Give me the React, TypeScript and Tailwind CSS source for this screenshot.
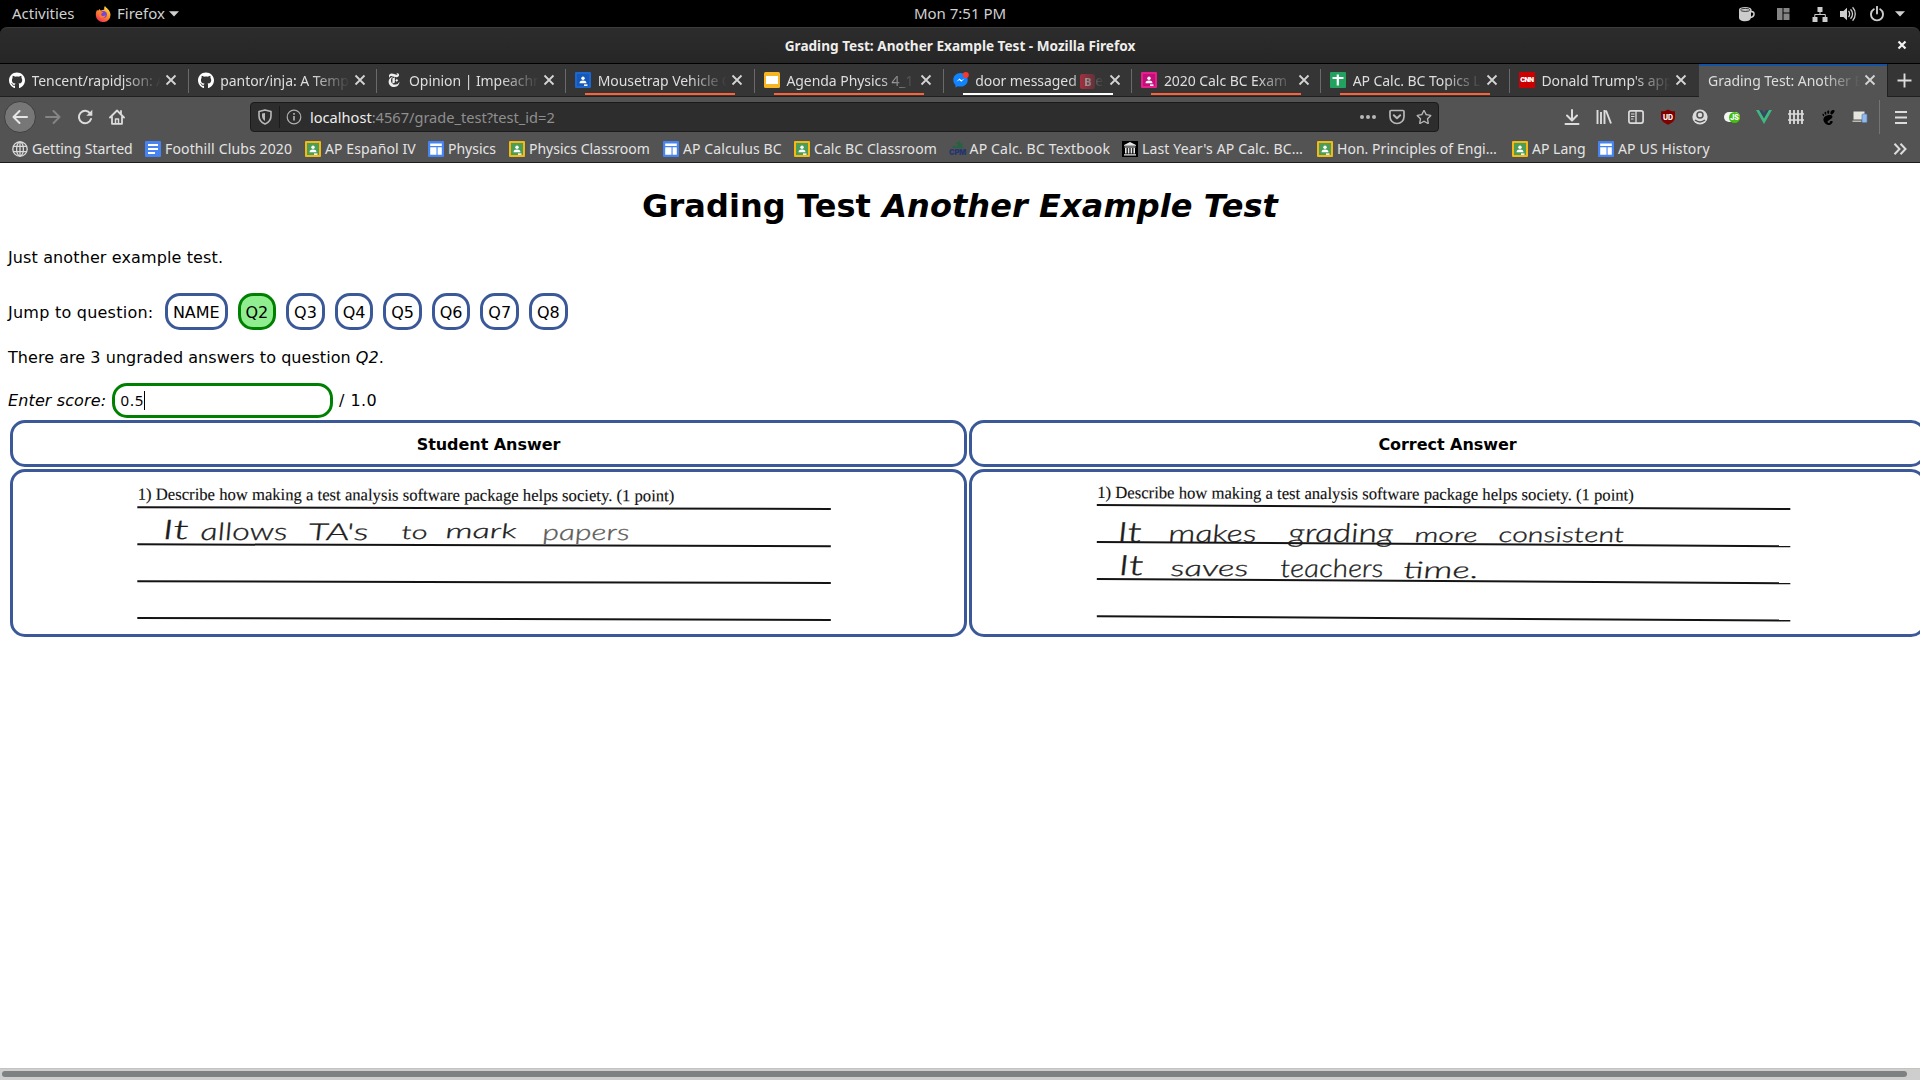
import type { ReactNode } from "react";
import { FaGithub, FaRegStar } from "react-icons/fa";
import { SiGnome, SiNewyorktimes } from "react-icons/si";

/* ---------- favicons ---------- */

const ClassroomIcon = ({ frame, board }: { frame: string; board: string }) => (
  <svg width="16" height="16" viewBox="0 0 16 16" className="shrink-0">
    <rect width="16" height="16" rx="1" fill={frame} />
    <rect x="2" y="2" width="12" height="12" fill={board} />
    <circle cx="8" cy="6.3" r="1.7" fill="#fff" />
    <path d="M4.5 11.3c0-2 1.6-2.7 3.5-2.7s3.5.7 3.5 2.7z" fill="#fff" />
    <rect x="9" y="12.3" width="3.5" height="1.7" fill="#eee" />
  </svg>
);

const ClassroomYellow = () => <ClassroomIcon frame="#f5b912" board="#4c9d58" />;

const SitesIcon = () => (
  <svg width="16" height="16" viewBox="0 0 16 16" className="shrink-0">
    <rect width="16" height="16" rx="1" fill="#4683f3" />
    <path d="M2.2 2.5h11.6v2.6H2.2zM2.2 6.2h6.3v7.6H2.2zM9.6 6.2h4.2v7.6H9.6z" fill="#fff" />
  </svg>
);

const DocsIcon = () => (
  <svg width="16" height="16" viewBox="0 0 16 16" className="shrink-0">
    <rect width="16" height="16" rx="1" fill="#4683f3" />
    <path d="M3 3h10v2H3zM3 7h10v2H3zM3 11h7v2H3z" fill="#fff" />
  </svg>
);

const SlidesIcon = () => (
  <svg width="16" height="16" viewBox="0 0 16 16" className="shrink-0">
    <rect width="16" height="16" rx="1.5" fill="#f6b427" />
    <rect x="2" y="4" width="12" height="8" fill="#fff" />
  </svg>
);

const SheetsIcon = () => (
  <svg width="16" height="16" viewBox="0 0 16 16" className="shrink-0">
    <rect width="16" height="16" rx="1" fill="#23a15f" />
    <path d="M2.5 5h11v2h-4.6v6.5H6.7V7H2.5zM6.7 2.5h2.2V5H6.7z" fill="#fff" />
  </svg>
);

const MessengerIcon = () => (
  <svg width="16" height="16" viewBox="0 0 16 16" className="shrink-0">
    <path d="M7.5 1C3.3 1 .3 4 .3 8c0 2 .9 3.800 2.200 5v2.500l2.300-1.200c.8.2 1.700.3 2.700.3 4.200 0 7.200-2.900 7.200-6.700S11.700 1 7.500 1z" fill="#0f84fe" />
    <path d="M3.300 9.800l3.200-3.300 2 1.700 3-1.700-3.200 3.300-2-1.700z" fill="#fff" />
    <circle cx="12.800" cy="3" r="3" fill="#f5392f" />
  </svg>
);

const CnnIcon = () => (
  <span className="flex h-4 w-4 shrink-0 items-center justify-center bg-[#cc0000] font-['Inter'] text-[6.500px] leading-none font-black tracking-[-0.600px] text-white">
    CNN
  </span>
);

const GlobeIcon = () => (
  <svg width="16" height="16" viewBox="0 0 16 16" className="shrink-0" fill="none" stroke="#dadada" strokeWidth="1.3">
    <circle cx="8" cy="8" r="7.200" />
    <ellipse cx="8" cy="8" rx="3.400" ry="7.200" />
    <path d="M8 .8v14.400M1.500 5.300h13M1.500 10.700h13" />
  </svg>
);

const CpmIcon = () => (
  <span className="flex h-4 w-4 shrink-0 flex-col items-center">
    <svg width="16" height="8" viewBox="0 0 16 8">
      <path d="M9 0l2 2.500 2 .5-1.500 1.500L14 7H2l2-2.500 3 1.500L8 4 6 2.500z" fill="#23633f" />
    </svg>
    <span className="font-['Inter'] text-[7.500px] leading-[8px] font-black tracking-[-0.300px] text-[#25356f]">CPM</span>
  </span>
);

const ArchiveIcon = () => (
  <svg width="16" height="16" viewBox="0 0 16 16" className="shrink-0">
    <rect width="16" height="16" fill="#000" />
    <path d="M2 4l6-3 6 3v.8H2zM2.500 5.500h11v1h-11zM3 7h1.600v5.500H3zM5.800 7h1.600v5.500H5.800zM8.600 7h1.600v5.500H8.600zM11.400 7H13v5.500h-1.600zM2 13.200h12v1.300H2z" fill="#e8e8e8" />
  </svg>
);

/* ---------- desktop panel ---------- */

const Caret = () => (
  <svg width="10" height="6" viewBox="0 0 10 6" className="shrink-0">
    <path d="M0 .3h10L5 5.500z" fill="#d0d0d0" />
  </svg>
);

const FirefoxLogo = () => (
  <svg width="16" height="16" viewBox="0 0 16 16" className="shrink-0">
    <defs>
      <linearGradient id="flame" x1="0.800" y1="0" x2="0.200" y2="1">
        <stop offset="0" stopColor="#ffe34a" />
        <stop offset="0.450" stopColor="#ff9526" />
        <stop offset="1" stopColor="#f0265c" />
      </linearGradient>
    </defs>
    <path d="M10 0c1 1.800 2.600 2.300 3.700 4 1.200 1.600 1.800 3.200 1.800 5A7.300 7 0 0 1 .8 9c0-2 .4-4 1.500-5.300l.6 1.300L4.500 3l1 1.500c1.500-.3 3-.5 3.800-1C9 2 9.200 1 10 0z" fill="url(#flame)" />
    <circle cx="8.300" cy="8.500" r="3.600" fill="#7646d8" />
    <path d="M4.200 6c1.800-.7 3-.3 4 .6l-1.500 1c-.9.600-.8 1.700.300 2.200 1.300.5 2.600 0 3.600-.8-.300 2-1.600 3-3.300 3-2 0-3.600-1.800-3.600-4z" fill="#ff7a2e" />
  </svg>
);

const SystemBar = () => (
  <div className="grid h-[27px] shrink-0 grid-cols-3 items-center bg-black text-[15px] text-[#d0d0d0]">
    <div className="flex items-center pl-3">
      <span className="w-[83px]">Activities</span>
      <FirefoxLogo />
      <span className="mr-[4px] ml-[6px]">Firefox</span>
      <Caret />
    </div>
    <div className="text-center">Mon 7:51 PM</div>
    <div className="flex items-center justify-end pr-[15px]">
      <svg width="17" height="16" viewBox="0 0 17 16" className="mr-[22px]">
        <path d="M1 3.500v8C1 14 3.500 15.200 7 15.200s5.500-1.200 5.800-3C15 12 16.800 10.500 16.800 8S15.500 4.800 13.500 4.800V3.500zM13 6.500c1.400-.2 2.300.3 2.300 1.500S14.300 10.200 13 10.500z" fill="#ccc" fillRule="evenodd" />
        <ellipse cx="7.200" cy="3.700" rx="6.200" ry="2.700" fill="#ccc" />
        <ellipse cx="7.200" cy="3.900" rx="4.600" ry="1.500" fill="#ccc" stroke="#222" strokeWidth="0.900" />
      </svg>
      <svg width="13" height="14" viewBox="0 0 13 14" className="mr-[22px]">
        <path d="M0 1h5.500v12H0zM6.500 1H12.500v4.500h-6zM6.500 6.500H12.500v6.500h-6z" fill="#858585" />
      </svg>
      <svg width="16" height="16" viewBox="0 0 16 16" className="mr-[12px]" fill="#ccc">
        <path d="M5.500 1h5v5h-5zM.5 11h5v5h-5zM10.500 11h5v5h-5z" />
        <path d="M8 6v2.500M2.800 11.500V8.500h10.500v3" fill="none" stroke="#ccc" />
      </svg>
      <svg width="16" height="16" viewBox="0 0 16 16" className="mr-[13px]">
        <path d="M0 5h3.500L7 1.800v12.400L3.500 11H0z" fill="#ccc" />
        <path d="M8.500 5c1.500 1.500 1.500 4.500 0 6M10.500 3.200c2.700 2.500 2.700 7 0 9.600M12.600 1.300c3.500 3.500 3.500 10 0 13.400" fill="none" stroke="#ccc" strokeWidth="1.300" />
      </svg>
      <svg width="16" height="16" viewBox="0 0 16 16" className="mr-[10px]" fill="none" stroke="#ccc" strokeWidth="1.900">
        <path d="M4.800 3.300a6 6 0 1 0 6.400 0M8 .8v6.700" strokeLinecap="round" />
      </svg>
      <Caret />
    </div>
  </div>
);

const TitleBar = () => (
  <div className="bg-black">
    <div className="relative flex h-9 items-center justify-center rounded-t-[7px] border-t border-[#3b3b3b] bg-gradient-to-b from-[#2c2c2c] to-[#262626] pt-[2px] text-[13.600px] font-bold text-[#eeeeec]">
      Grading Test: Another Example Test - Mozilla Firefox
      <svg width="10" height="10" viewBox="0 0 10 10" className="absolute top-[12px] right-[13px]">
        <path d="M1.500 1.500l7 7M8.500 1.500l-7 7" stroke="#f2f2f2" strokeWidth="2.200" />
      </svg>
    </div>
  </div>
);

/* ---------- tabs ---------- */

const CloseX = () => (
  <svg width="12" height="12" viewBox="0 0 12 12" className="shrink-0">
    <path d="M1.500 1.500l9 9M10.500 1.500l-9 9" stroke="#d4d4d4" strokeWidth="1.800" />
  </svg>
);

type TabData = { title: ReactNode; icon?: ReactNode; bar?: string; active?: boolean; last?: boolean };

const tabs: TabData[] = [
  { title: "Tencent/rapidjson: A", icon: <FaGithub size={17} color="#fff" /> },
  { title: "pantor/inja: A Temp", icon: <FaGithub size={17} color="#fff" /> },
  { title: "Opinion | Impeachm", icon: <SiNewyorktimes size={14} color="#eee" /> },
  { title: "Mousetrap Vehicle C", icon: <ClassroomIcon frame="#1b66cf" board="#1658b8" />, bar: "bg-[#ff6139]" },
  { title: "Agenda Physics 4_1", icon: <SlidesIcon />, bar: "bg-[#ff6139]" },
  {
    title: (
      <>
        door messaged{" "}
        <span className="inline-flex h-[15px] w-[15px] items-center justify-center rounded-[2px] bg-[#dd2e44] text-[11px] leading-none font-bold text-white">B</span>
        er
      </>
    ),
    icon: <MessengerIcon />,
    bar: "bg-white",
  },
  { title: "2020 Calc BC Exam", icon: <ClassroomIcon frame="#e91e8c" board="#c2107a" />, bar: "bg-[#ff6139]" },
  { title: "AP Calc. BC Topics L", icon: <SheetsIcon />, bar: "bg-[#ff6139]" },
  { title: "Donald Trump's app", icon: <CnnIcon />, last: true },
  { title: "Grading Test: Another E", active: true },
];

const Tab = ({ title, icon, bar, active, last }: TabData) => (
  <div
    className={
      active
        ? "relative flex w-[188.800px] items-center border-t-2 border-[#15539e] bg-[#535353] pr-[11.500px] pb-[3px] pl-[9.500px]"
        : "relative flex w-[188.740px] items-center border-b border-[#202020] bg-[#353535] pr-[11.500px] pl-[9px]"
    }
  >
    {icon && <span className="mr-[6.500px] flex w-4 shrink-0 justify-center">{icon}</span>}
    <span className="mr-[4px] min-w-0 flex-1 overflow-hidden tracking-[-0.060px] whitespace-nowrap [mask-image:linear-gradient(to_right,black_calc(100%_-_38px),transparent)]">{title}</span>
    <CloseX />
    {bar && <span className={`absolute bottom-px left-[19px] h-[2px] w-[150px] ${bar}`} />}
    {!active && !last && <span className="absolute top-[5px] right-0 h-6 w-px bg-[#6a6a6a]" />}
  </div>
);

const TabStrip = () => (
  <div className="flex h-[34px] shrink-0 border-t border-black bg-[#353535] text-[14px] text-[#dedede]">
    {tabs.map((t, i) => (
      <Tab key={i} {...t} />
    ))}
    <div className="flex flex-1 items-center justify-center border-b border-l border-[#202020]">
      <svg width="15" height="15" viewBox="0 0 15 15">
        <path d="M7.500.5v14M.5 7.500h14" stroke="#dcdcdc" strokeWidth="1.900" />
      </svg>
    </div>
  </div>
);

/* ---------- toolbar ---------- */

const Slot = ({ children }: { children: ReactNode }) => (
  <span className="flex w-8 shrink-0 items-center justify-center">{children}</span>
);

const Toolbar = () => (
  <div className="flex h-10 shrink-0 items-center bg-[#535353]">
    <div className="flex w-[250px] items-center pl-1">
      <span className="mr-[1px] flex h-8 w-8 items-center justify-center rounded-full border border-[#3f3f3f] bg-[#777777]">
        <svg width="16" height="16" viewBox="0 0 16 16" fill="none" stroke="#e6e6e6" strokeWidth="2" strokeLinecap="round" strokeLinejoin="round">
          <path d="M15 8H1.500M7.500 2l-6 6 6 6" />
        </svg>
      </span>
      <Slot>
        <svg width="16" height="16" viewBox="0 0 16 16" fill="none" stroke="#858585" strokeWidth="2" strokeLinecap="round" strokeLinejoin="round">
          <path d="M1 8h13.500M8.500 2l6 6-6 6" />
        </svg>
      </Slot>
      <Slot>
        <svg width="16" height="16" viewBox="0 0 16 16" fill="none" stroke="#dcdcdc" strokeWidth="2">
          <path d="M13.200 4.500a6.200 6.200 0 1 0 .8 5.500" strokeLinecap="round" />
          <path d="M15.300.8v6h-6z" fill="#dcdcdc" stroke="none" />
        </svg>
      </Slot>
      <Slot>
        <svg width="16" height="16" viewBox="0 0 16 16" fill="none" stroke="#dcdcdc" strokeWidth="1.800" strokeLinejoin="round" strokeLinecap="round">
          <path d="M1 8.500L8 1.500l7 7M3 8v6.800h10V8M12 2v3" />
          <path d="M6.500 14.500v-4.500h3v4.500" strokeWidth="1.500" />
        </svg>
      </Slot>
    </div>
    <div className="flex h-[30px] w-[1189px] items-center rounded-[4px] border border-[#1b1b1b] bg-[#2d2d2d] pl-[7px]">
      <svg width="14" height="16" viewBox="0 0 14 16" fill="none" stroke="#b8b8b8" strokeWidth="1.600">
        <path d="M1 2.500L7 1l6 1.500V7c0 4-2.500 6.500-6 8-3.500-1.500-6-4-6-8z" strokeLinejoin="round" />
        <path d="M7 4v8c-2-1.200-3-3-3-5V4.500z" fill="#b8b8b8" stroke="none" />
      </svg>
      <span className="mr-[6px] ml-[7px] h-[22px] w-px bg-[#1b1b1b]" />
      <svg width="16" height="16" viewBox="0 0 16 16" fill="none" stroke="#b0b0b0" strokeWidth="1.200">
        <circle cx="8" cy="8" r="6.800" />
        <path d="M8 7v4.500M8 4v1.700" strokeWidth="1.700" />
      </svg>
      <span className="ml-[8px] flex-1 pt-[2px] text-[14.600px] text-[#8f8f8f]">
        <span className="text-[#eeeeec]">localhost</span>:4567/grade_test?test_id=2
      </span>
      <svg width="16" height="4" viewBox="0 0 16 4" className="mr-[13px]" fill="#b8b8b8">
        <circle cx="2" cy="2" r="2" />
        <circle cx="8" cy="2" r="2" />
        <circle cx="14" cy="2" r="2" />
      </svg>
      <svg width="16" height="16" viewBox="0 0 16 16" className="mr-[11px]" fill="none" stroke="#b8b8b8" strokeWidth="1.700" strokeLinejoin="round" strokeLinecap="round">
        <path d="M1 2.500C1 1.800 1.300 1.500 2 1.500h12c.7 0 1 .3 1 1V7.500c0 4-3 7-7 7s-7-3-7-7z" />
        <path d="M4.800 6.300L8 9.300l3.200-3" strokeWidth="2" />
      </svg>
      <FaRegStar size={16} color="#b8b8b8" className="mr-[6px]" />
    </div>
    <div className="flex flex-1 items-center pl-[117px]">
      <Slot>
        <svg width="16" height="16" viewBox="0 0 16 16" fill="none" stroke="#dcdcdc" strokeWidth="2" strokeLinecap="round" strokeLinejoin="round">
          <path d="M8 1v10M3 6.500l5 5 5-5M1.500 15h13" />
        </svg>
      </Slot>
      <Slot>
        <svg width="16" height="16" viewBox="0 0 16 16" fill="none" stroke="#dcdcdc" strokeWidth="1.900">
          <path d="M1.500 1v14M5 3v12M8.500 1v14M10 1.500L15 14.500" />
        </svg>
      </Slot>
      <Slot>
        <svg width="16" height="16" viewBox="0 0 16 16" fill="none" stroke="#dcdcdc" strokeWidth="1.700">
          <rect x="0.900" y="1.900" width="14.200" height="12.200" rx="2" />
          <path d="M8 2v12" strokeWidth="1.300" />
          <path d="M3 5h3.500M3 7.500h3.500M3 10h2.500" strokeWidth="1.100" />
        </svg>
      </Slot>
      <Slot>
        <span className="relative flex h-4 w-4 items-center justify-center">
          <svg width="16" height="16" viewBox="0 0 16 16" className="absolute inset-0">
            <path d="M8 .5C6 1.800 4 2.300 1 2.300V8c0 4 3 6 7 7.700C12 14 15 12 15 8V2.300C12 2.300 10 1.800 8 .5z" fill="#800000" />
          </svg>
          <span className="relative font-['Inter'] text-[7px] leading-none font-extrabold text-white">UD</span>
        </span>
      </Slot>
      <Slot>
        <svg width="16" height="16" viewBox="0 0 16 16">
          <circle cx="8" cy="8" r="7.600" fill="#dcdcdc" />
          <circle cx="8" cy="6" r="3" fill="none" stroke="#535353" strokeWidth="1.500" />
          <path d="M3 11c3 2.300 7 2.300 10 0" fill="none" stroke="#535353" strokeWidth="1.500" />
        </svg>
      </Slot>
      <Slot>
        <span className="flex h-[10px] w-4 items-center justify-end rounded-full bg-[#f4f4f4]">
          <span className="flex h-[11px] w-[11px] shrink-0 items-center justify-center rounded-full bg-[#43bf0e] font-['Inter'] text-[7px] leading-none font-extrabold text-white">JS</span>
        </span>
      </Slot>
      <Slot>
        <svg width="16" height="16" viewBox="0 0 16 16">
          <path d="M0 1h3.200L8 9.300 12.800 1H16L8 15z" fill="#41b883" />
          <path d="M3.200 1h3L8 4.100 9.800 1h3L8 9.300z" fill="#34495e" />
        </svg>
      </Slot>
      <Slot>
        <svg width="16" height="16" viewBox="0 0 16 16" fill="none" stroke="#dcdcdc" strokeWidth="1.800">
          <path d="M2 1v14M6 1v14M10 1v14M14 1v14" />
          <path d="M0 5h16M0 11h16" strokeWidth="1.400" />
        </svg>
      </Slot>
      <Slot>
        <SiGnome size={15} color="#000" />
      </Slot>
      <Slot>
        <svg width="16" height="16" viewBox="0 0 16 16">
          <rect x="1.500" y="2.500" width="11" height="8" fill="#e6e6dc" />
          <path d="M.5 11.500h9v1.500h-9z" fill="#b9bdb6" />
          <rect x="10" y="5" width="5" height="8.500" rx="1" fill="#93b9e8" stroke="#5480b4" strokeWidth="0.700" />
        </svg>
      </Slot>
      <span className="ml-[3px] h-[34px] w-px bg-[#747474]" />
      <span className="flex flex-1 items-center justify-center pl-[2px]">
        <svg width="12" height="13" viewBox="0 0 12 13">
          <path d="M0 1h12M0 6.500h12M0 12h12" stroke="#dcdcdc" strokeWidth="1.900" />
        </svg>
      </span>
    </div>
  </div>
);

/* ---------- bookmarks ---------- */

const bookmarks: { label: string; icon: ReactNode; w: string; t?: string }[] = [
  { label: "Getting Started", icon: <GlobeIcon />, w: "w-[133px]" },
  { label: "Foothill Clubs 2020", icon: <DocsIcon />, w: "w-[160px]", t: "tracking-[0.140px]" },
  { label: "AP Español IV", icon: <ClassroomYellow />, w: "w-[123px]", t: "tracking-[0.100px]" },
  { label: "Physics", icon: <SitesIcon />, w: "w-[81px]" },
  { label: "Physics Classroom", icon: <ClassroomYellow />, w: "w-[154px]" },
  { label: "AP Calculus BC", icon: <SitesIcon />, w: "w-[131px]", t: "tracking-[0.100px]" },
  { label: "Calc BC Classroom", icon: <ClassroomYellow />, w: "w-[155.500px]", t: "tracking-[0.080px]" },
  { label: "AP Calc. BC Textbook", icon: <CpmIcon />, w: "w-[172.500px]", t: "tracking-[0.180px]" },
  { label: "Last Year's AP Calc. BC…", icon: <ArchiveIcon />, w: "w-[195px]", t: "tracking-[0.140px]" },
  { label: "Hon. Principles of Engi…", icon: <ClassroomYellow />, w: "w-[195px]", t: "tracking-[0.040px]" },
  { label: "AP Lang", icon: <ClassroomYellow />, w: "w-[86px]" },
  { label: "AP US History", icon: <SitesIcon />, w: "w-[130px]", t: "tracking-[0.150px]" },
];

const Bookmarks = () => (
  <div className="flex h-[26px] shrink-0 items-center border-b border-[#1b1b1b] bg-[#535353] pb-[2px] pl-[12px] text-[14px] text-[#e4e4e4]">
    {bookmarks.map((b) => (
      <div key={b.label} className={`flex shrink-0 items-center gap-[4px] whitespace-nowrap ${b.w}`}>
        {b.icon}
        <span className={b.t}>{b.label}</span>
      </div>
    ))}
    <svg width="14" height="12" viewBox="0 0 14 12" className="mr-[13px] ml-auto" fill="none" stroke="#dcdcdc" strokeWidth="2">
      <path d="M1.500.8L6.500 6l-5 5.200M7.500.8l5 5.200-5 5.200" />
    </svg>
  </div>
);

/* ---------- page ---------- */

const questions = ["NAME", "Q2", "Q3", "Q4", "Q5", "Q6", "Q7", "Q8"];

type Word = { t: string; x: number; y: number; w: number; size?: number; c?: string };

const studentWords: Word[] = [
  { t: "It", x: 163, y: 539, w: 27, size: 27 },
  { t: "allows", x: 201, y: 539.5, w: 87, size: 24 },
  { t: "TA's", x: 309, y: 540, w: 60, size: 23 },
  { t: "to", x: 402, y: 539, w: 26, size: 19 },
  { t: "mark", x: 446, y: 537.5, w: 71, size: 20 },
  { t: "papers", x: 543, y: 540, w: 87, size: 22, c: "#5c5c5a" },
];

const correctWords: Word[] = [
  { t: "It", x: 1118, y: 541.500, w: 25, size: 28 },
  { t: "makes", x: 1169, y: 541.500, w: 88, size: 24 },
  { t: "grading", x: 1289, y: 542, w: 105, size: 26 },
  { t: "more", x: 1415, y: 542, w: 63, size: 20 },
  { t: "consistent", x: 1499, y: 542, w: 126, size: 21 },
  { t: "It", x: 1119, y: 575, w: 26, size: 28 },
  { t: "saves", x: 1171, y: 575.500, w: 78, size: 22 },
  { t: "teachers", x: 1281, y: 577, w: 103, size: 25 },
  { t: "time.", x: 1404, y: 578, w: 75, size: 23 },
];

const Ink = ({ t, x, y, w, size = 22, c = "#1c1c1c" }: Word) => (
  <text
    transform={`translate(${x} ${y}) skewX(5)`}
    textLength={w}
    lengthAdjust="spacingAndGlyphs"
    fontSize={size}
    fill={c}
    stroke={c}
    strokeWidth="0.300"
    className="font-['Lato'] font-light tracking-normal italic"
  >
    {t}
  </text>
);

const Scan = ({
  viewBox,
  left,
  textY,
  tilt,
  rules,
  words,
}: {
  viewBox: string;
  left: number;
  textY: number;
  tilt: number;
  rules: [number, number][];
  words: Word[];
}) => (
  <svg width="951" height="162" viewBox={viewBox} className="block">
    {rules.map(([a, b], i) => (
      <line key={i} x1={left} y1={a} x2={left + 693.500} y2={b} stroke="#141414" strokeWidth="2" />
    ))}
    <text
      transform={`translate(${left + 0.500} ${textY}) rotate(${tilt})`}
      textLength="536.500"
      lengthAdjust="spacingAndGlyphs"
      fontSize="17"
      fill="#111111"
      stroke="#111111"
      strokeWidth="0.150"
      className="font-['Liberation_Serif',serif] tracking-normal"
    >
      1) Describe how making a test analysis software package helps society. (1 point)
    </text>
    {words.map((w, i) => (
      <Ink key={i} {...w} />
    ))}
  </svg>
);

const cell = "rounded-[15px] border-[3px] border-[#3b5998]";

const GradingPage = () => (
  <main className="flex min-h-0 flex-1 flex-col overflow-hidden bg-white pt-[25px] pl-2 font-['DejaVu_Sans',sans-serif] text-[16px] leading-[19px] tracking-[0.120px] text-black">
    <h1 className="mr-2 text-center text-[32px] leading-[37px] font-bold tracking-[0.080px]">
      Grading Test <i>Another Example Test</i>
    </h1>
    <p className="mt-[23px]">Just another example test.</p>
    <div className="mt-[26px] flex items-center">
      <span className="w-[152px] pt-px tracking-[0.240px]">Jump to question:</span>
      {questions.map((q) => (
        <span
          key={q}
          className={
            q === "Q2"
              ? "mx-[5px] rounded-[15px] border-[3px] border-[#008000] bg-[#90ee90] px-[4.900px] pt-[7px] pb-[5px] tracking-normal"
              : "mx-[5px] rounded-[15px] border-[3px] border-[#3b5998] px-[4.900px] pt-[7px] pb-[5px] tracking-normal"
          }
        >
          {q}
        </span>
      ))}
    </div>
    <p className="mt-[18px] tracking-[0.050px]">
      There are 3 ungraded answers to question <i>Q2</i>.
    </p>
    <div className="mt-4 flex h-[35px] items-center">
      <i className="w-[104px]">Enter score:</i>
      <span className="flex h-[35px] w-[221px] items-center rounded-[15px] border-[3px] border-[#008000] pl-[5.500px] font-['Noto_Sans',sans-serif] text-[15px] tracking-[0.800px]">
        0.5
        <span className="h-[19px] w-px bg-black" />
      </span>
      <span className="ml-[6px] tracking-[0.450px]">/ 1.0</span>
    </div>
    <div className="mt-[2px] ml-[2px] grid w-[1916px] shrink-0 grid-cols-[957px_957px] grid-rows-[47px_168px] gap-[2px]">
      <div className={`flex items-center justify-center pt-[2px] font-bold tracking-[-0.050px] ${cell}`}>Student Answer</div>
      <div className={`flex items-center justify-center pt-[2px] font-bold tracking-[-0.050px] ${cell}`}>Correct Answer</div>
      <div className={cell}>
        <Scan
          viewBox="13 472 951 162"
          left={137.300}
          textY={499.700}
          tilt={0.170}
          rules={[[507.300, 509], [544.300, 546.200], [581.200, 583], [618, 620]]}
          words={studentWords}
        />
      </div>
      <div className={cell}>
        <Scan
          viewBox="972 472 951 162"
          left={1096.800}
          textY={498.000}
          tilt={0.280}
          rules={[[505, 509], [542, 546.200], [579, 583.200], [616.300, 620.500]]}
          words={correctWords}
        />
      </div>
    </div>
    <div className="mt-auto -ml-2 h-3 shrink-0 border-t border-[#c6c2bd] bg-[#cecece] pt-[2px]">
      <div className="ml-[2px] h-[6px] w-[1905px] rounded-full bg-[#7e8182]" />
    </div>
  </main>
);

export default function App() {
  return (
    <div className="flex h-[1080px] w-[1920px] flex-col overflow-hidden bg-black font-['Noto_Sans',sans-serif]">
      <SystemBar />
      <TitleBar />
      <TabStrip />
      <Toolbar />
      <Bookmarks />
      <GradingPage />
    </div>
  );
}
